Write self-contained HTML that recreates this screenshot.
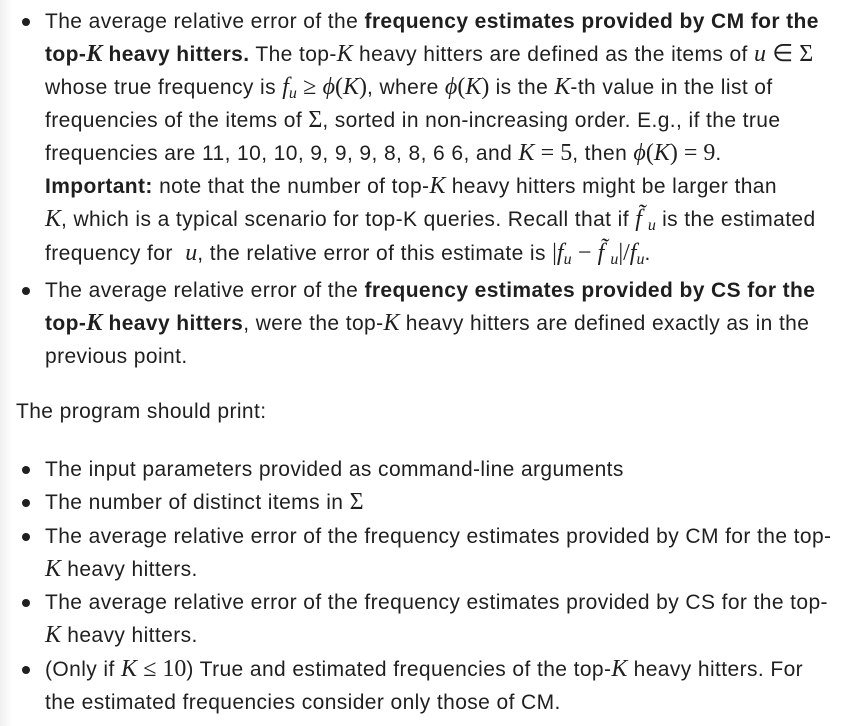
<!DOCTYPE html>
<html><head><meta charset="utf-8"><style>
html,body{margin:0;padding:0;width:859px;height:726px;overflow:hidden;background:#fff;}
body{background:linear-gradient(to right,#f0f0f0 0px,#fff 12px);font-family:"Liberation Sans","DejaVu Sans",sans-serif;color:#1f1f1f;font-size:21px;letter-spacing:0.4px;}
.l{position:absolute;left:45px;height:33px;line-height:33px;white-space:nowrap;}
.b{position:absolute;left:22px;width:8px;height:8px;border-radius:50%;background:#1f1f1f;}
m{font-family:"Liberation Serif",serif;font-style:italic;font-size:24px;letter-spacing:0;line-height:0;}
r{font-family:"Liberation Serif",serif;font-size:24px;letter-spacing:0;line-height:0;}
b{font-weight:bold;}
sub{font-size:16px;vertical-align:-4px;line-height:0;}
</style></head><body>
<div class="b" style="top:18px"></div>
<div class="l" style="top:5px">The average relative error of the <b>frequency estimates provided by CM for the</b></div>
<div class="l" style="top:38px"><b>top-<m>K</m> heavy hitters.</b> The top-<m>K</m> heavy hitters are defined as the items of <m>u</m> <r>∈ Σ</r></div>
<div class="l" style="top:71px">whose true frequency is <m>f<sub>u</sub></m> <r>≥</r> <m>ϕ</m><r>(</r><m>K</m><r>)</r>, where <m>ϕ</m><r>(</r><m>K</m><r>)</r> is the <m>K</m>-th value in the list of</div>
<div class="l" style="top:104px">frequencies of the items of <r>Σ</r>, sorted in non-increasing order. E.g., if the true</div>
<div class="l" style="top:137px">frequencies are 11, 10, 10, 9, 9, 9, 8, 8, 6 6, and <m>K</m> <r>= 5</r>, then <m>ϕ</m><r>(</r><m>K</m><r>) = 9</r>.</div>
<div class="l" style="top:170px"><b>Important:</b> note that the number of top-<m>K</m> heavy hitters might be larger than</div>
<div class="l" style="top:203px"><m>K</m>, which is a typical scenario for top-K queries. Recall that if <m>f̃ <sub>u</sub></m> is the estimated</div>
<div class="l" style="top:237px">frequency for &nbsp;<m>u</m>, the relative error of this estimate is <r>|</r><m>f<sub>u</sub></m> <r>−</r> <m>f̃ <sub>u</sub></m><r>|/</r><m>f<sub>u</sub></m>.</div>
<div class="b" style="top:287px"></div>
<div class="l" style="top:274px">The average relative error of the <b>frequency estimates provided by CS for the</b></div>
<div class="l" style="top:307px"><b>top-<m>K</m> heavy hitters</b>, were the top-<m>K</m> heavy hitters are defined exactly as in the</div>
<div class="l" style="top:340px">previous point.</div>
<div class="l" style="top:395px;left:16px">The program should print:</div>
<div class="b" style="top:466px"></div>
<div class="l" style="top:453px">The input parameters provided as command-line arguments</div>
<div class="b" style="top:499px"></div>
<div class="l" style="top:486px">The number of distinct items in <r>Σ</r></div>
<div class="b" style="top:533px"></div>
<div class="l" style="top:520px">The average relative error of the frequency estimates provided by CM for the top-</div>
<div class="l" style="top:553px"><m>K</m> heavy hitters.</div>
<div class="b" style="top:599px"></div>
<div class="l" style="top:586px">The average relative error of the frequency estimates provided by CS for the top-</div>
<div class="l" style="top:619px"><m>K</m> heavy hitters.</div>
<div class="b" style="top:666px"></div>
<div class="l" style="top:653px">(Only if <m>K</m> <r>≤ 10</r>) True and estimated frequencies of the top-<m>K</m> heavy hitters. For</div>
<div class="l" style="top:686px">the estimated frequencies consider only those of CM.</div>
</body></html>
